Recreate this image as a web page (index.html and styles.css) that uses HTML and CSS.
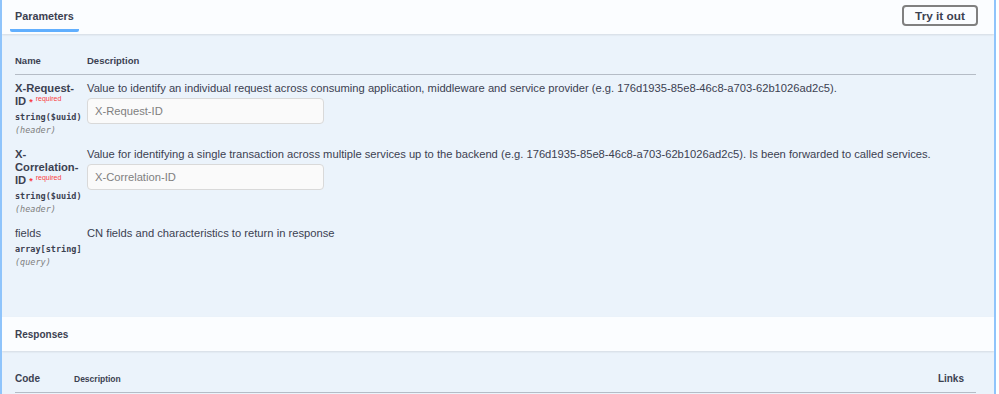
FILE: index.html
```html
<!DOCTYPE html>
<html lang="en">
<head>
    <meta charset="UTF-8">
    <title>Operation parameters</title>
    <link rel="stylesheet" href="styles.css">
</head>
<body>
    <div class="opblock">
        <div class="section-header">
            <div class="tab-header">
                <h4 class="tab-title">Parameters</h4>
            </div>
            <button class="try-out">Try it out</button>
        </div>

        <div class="parameters">
            <table class="params-table">
                <thead>
                    <tr>
                        <th class="col-name">Name</th>
                        <th class="col-desc">Description</th>
                    </tr>
                </thead>
                <tbody>
                    <tr>
                        <td class="col-name">
                            <div class="param-name">X-Request-<br>ID<span class="required">*</span><span class="required-label">required</span></div>
                            <div class="param-type">string<span class="param-format">($uuid)</span></div>
                            <div class="param-in">(header)</div>
                        </td>
                        <td class="col-desc">
                            <p class="param-text">Value to identify an individual request across consuming application, middleware and service provider (e.g. 176d1935-85e8-46c8-a703-62b1026ad2c5).</p>
                            <input class="param-input" type="text" placeholder="X-Request-ID">
                        </td>
                    </tr>
                    <tr>
                        <td class="col-name">
                            <div class="param-name">X-<br>Correlation-<br>ID<span class="required">*</span><span class="required-label">required</span></div>
                            <div class="param-type">string<span class="param-format">($uuid)</span></div>
                            <div class="param-in">(header)</div>
                        </td>
                        <td class="col-desc">
                            <p class="param-text">Value for identifying a single transaction across multiple services up to the backend (e.g. 176d1935-85e8-46c8-a703-62b1026ad2c5). Is been forwarded to called services.</p>
                            <input class="param-input" type="text" placeholder="X-Correlation-ID">
                        </td>
                    </tr>
                    <tr>
                        <td class="col-name">
                            <div class="param-name plain">fields</div>
                            <div class="param-type">array[string]</div>
                            <div class="param-in">(query)</div>
                        </td>
                        <td class="col-desc">
                            <p class="param-text">CN fields and characteristics to return in response</p>
                        </td>
                    </tr>
                </tbody>
            </table>
        </div>

        <div class="section-header responses-header">
            <h4 class="responses-title">Responses</h4>
        </div>

        <div class="responses">
            <table class="responses-table">
                <thead>
                    <tr>
                        <th class="col-code">Code</th>
                        <th class="col-rdesc">Description</th>
                        <th class="col-links">Links</th>
                    </tr>
                </thead>
            </table>
        </div>
    </div>
</body>
</html>
```

FILE: styles.css
```css
body {
    margin: 0;
    background-color: #fff;
    font-family: "Liberation Sans", Arial, sans-serif;
    color: #3b4151;
}

.opblock {
    width: 992px;
    height: 394px;
    overflow: hidden;
    background-color: #ebf3fb;
    border-left: 2px solid #8fc4fb;
    border-right: 2px solid #8fc4fb;
}

.section-header {
    display: flex;
    align-items: center;
    justify-content: space-between;
    height: 34px;
    padding: 0 16px 0 8px;
    background-color: #fbfdff;
    box-shadow: 0 1px 2px rgba(0, 0, 0, 0.1);
    box-sizing: border-box;
    position: relative;
}

.tab-header {
    align-self: stretch;
    display: flex;
    align-items: center;
    padding: 0 5px;
    border-bottom: 3px solid #61affe;
    border-radius: 2px;
    margin-bottom: 2px;
    padding-top: 3px;
}

.tab-title {
    margin: 0;
    font-size: 10.8px;
    font-weight: bold;
}

.try-out {
    font-family: "Liberation Sans", Arial, sans-serif;
    font-size: 11.8px;
    font-weight: bold;
    color: #3b4151;
    background: transparent;
    border: 2px solid #808080;
    border-radius: 4px;
    width: 76px;
    height: 21px;
    margin-top: -3px;
    padding: 0;
}

.parameters {
    height: 283px;
    padding: 21px 18px 0 13px;
    box-sizing: border-box;
}

table {
    width: 100%;
    border-collapse: collapse;
}

th {
    text-align: left;
    font-size: 9.5px;
    font-weight: bold;
    line-height: 12px;
    padding: 0 0 7px;
    border-bottom: 1px solid #b5bcc6;
}

.params-table .col-name {
    width: 72px;
}

td {
    vertical-align: top;
    padding: 7px 0 4px;
}

.param-name {
    font-size: 11.2px;
    font-weight: bold;
    line-height: 13px;
}

.param-name.plain {
    font-weight: normal;
}

.required {
    color: #f93e3e;
    font-size: 9px;
    line-height: 1;
    margin-left: 3px;
}

.required-label {
    color: #f93e3e;
    font-size: 7px;
    font-weight: normal;
    line-height: 1;
    margin-left: 3px;
    vertical-align: 4px;
}

.param-type {
    font-family: "DejaVu Sans Mono", monospace;
    font-size: 8.5px;
    font-weight: bold;
    margin-top: 3px;
    line-height: 13px;
}

.param-in {
    font-family: "DejaVu Sans Mono", monospace;
    font-size: 8.5px;
    font-style: italic;
    color: #808080;
    line-height: 13px;
}

.param-text {
    margin: 0 0 3px;
    font-size: 11.2px;
    line-height: 13px;
}

.param-input {
    display: block;
    width: 237px;
    height: 26px;
    box-sizing: border-box;
    background-color: #fafafa;
    border: 1px solid #d9d9d9;
    border-radius: 4px;
    padding: 0 7px;
    font-family: "Liberation Sans", Arial, sans-serif;
    font-size: 11.2px;
}

.param-input::placeholder {
    color: #808080;
}

.responses-header {
    justify-content: flex-start;
    padding-left: 13px;
}

.responses-title {
    margin: 0;
    font-size: 10px;
    font-weight: bold;
}

.responses {
    padding: 22px 18px 0 13px;
}

.responses-table th {
    font-size: 8.5px;
}

.responses-table .col-code {
    width: 59px;
    font-size: 10px;
}

.responses-table .col-links {
    text-align: right;
    font-size: 10px;
    padding-right: 12px;
}
```
